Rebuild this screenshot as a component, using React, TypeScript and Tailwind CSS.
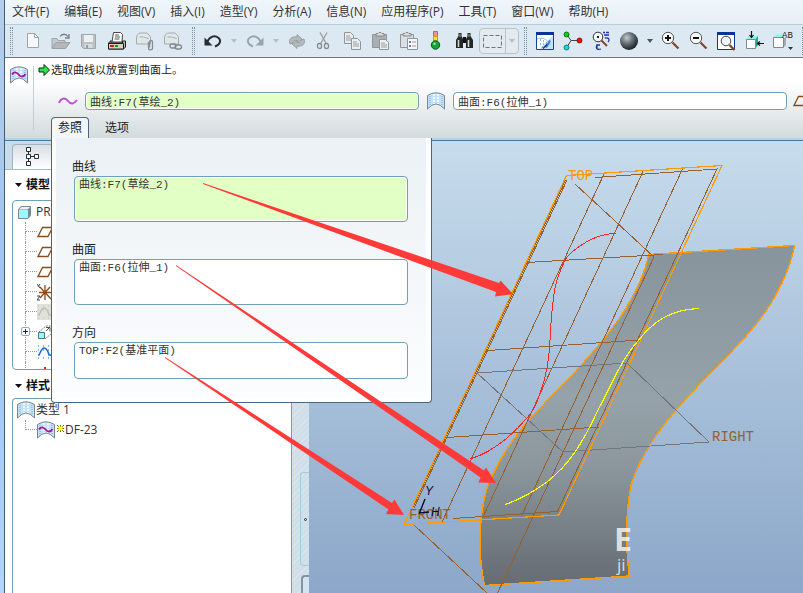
import type { ReactNode } from 'react'

const menus = [
  '文件(F)', '编辑(E)', '视图(V)', '插入(I)', '造型(Y)', '分析(A)',
  '信息(N)', '应用程序(P)', '工具(T)', '窗口(W)', '帮助(H)',
]

const fields = [
  { id: 'ref-curve', label: '曲线', value: '曲线:F7(草绘_2)', active: true, size: 'h-[46px]' },
  { id: 'ref-surface', label: '曲面', value: '曲面:F6(拉伸_1)', active: false, size: 'h-[46px]' },
  { id: 'ref-direction', label: '方向', value: 'TOP:F2(基准平面)', active: false, size: 'h-[37px]' },
]

const monoFont = "font-['Liberation_Mono','Noto_Sans_CJK_SC',monospace]"

function Icon({ children }: { children: ReactNode }) {
  return (
    <svg width="20" height="20" viewBox="0 0 20 20" fill="none" className="shrink-0" aria-hidden="true">
      {children}
    </svg>
  )
}

function ToolButton({ label, children }: { label: string; children: ReactNode }) {
  return (
    <button type="button" aria-label={label} className="flex h-8 w-7 shrink-0 items-center justify-center">
      <Icon>{children}</Icon>
    </button>
  )
}

function Caret({ label, dark, wide }: { label: string; dark?: boolean; wide?: boolean }) {
  return (
    <button type="button" aria-label={label} className={`flex h-8 shrink-0 items-center justify-center ${wide ? 'w-[14px]' : 'w-3'}`}>
      <svg width="6" height="4" viewBox="0 0 6 4" fill={dark ? '#44545e' : '#b4bec5'}>
        <path d="M0 0h6L3 4z" />
      </svg>
    </button>
  )
}

function Grip() {
  return (
    <div className="flex w-3 shrink-0 justify-center gap-px">
      <span className="h-7 border-l border-dotted border-[#7d93a3]" />
      <span className="h-7 border-l border-dotted border-[#7d93a3]" />
    </div>
  )
}

function SurfaceIcon({ curve }: { curve?: boolean }) {
  return (
    <svg width="18" height="18" viewBox="0 0 18 18" fill="none" className="shrink-0" aria-hidden="true">
      <path d="M.5 3.5Q9-2 17.5 3.5V17Q13 12 9 12T1 17z" fill="#c3e1f7" />
      <path d="M3 4v10M15 4v10" stroke="#9cc4e4" strokeWidth="2" strokeDasharray="1 1" />
      <path d="M7 2v10M11 2v10" stroke="#eef8ff" strokeWidth="2" strokeDasharray="2 1" />
      <path d="M.5 3.5Q9-2 17.5 3.5V17Q13 12 9 12T.5 17z" stroke="#7b858e" />
      {curve && <path d="M2 8.500c2-3 4.500-2.500 6.500 0s5 3 7-.5" stroke="#a313a9" strokeWidth="1.800" />}
    </svg>
  )
}

function PlaneIcon() {
  return (
    <svg width="16" height="12" viewBox="0 0 16 12" fill="none" className="shrink-0" aria-hidden="true">
      <path d="M5.500 1.500h10l-4.500 9H1z" stroke="#8b4a1e" strokeWidth="1.300" />
    </svg>
  )
}

function MenuBar() {
  return (
    <nav className="flex h-6 shrink-0 items-center gap-px bg-linear-to-b from-[#f0f6fa] to-[#e6eff6]">
      {menus.map(item => (
        <button key={item} type="button" className="shrink-0 px-[7px] text-xs leading-6 whitespace-nowrap text-[#333]">
          {item}
        </button>
      ))}
    </nav>
  )
}

function Toolbar() {
  return (
    <div className="flex h-[34px] shrink-0 items-center overflow-hidden border-t border-b border-t-[#b5cedd] border-b-[#4b829f] bg-[#dce9f2]">
      <Grip />
      <span className="w-[2px] shrink-0" />
      <ToolButton label="新建">
        <path d="M4.500 2.500h7l4 4v10h-11z" fill="#f6f7f7" stroke="#a0a4a7" />
        <path d="M11.500 2.500v4h4" stroke="#a0a4a7" />
      </ToolButton>
      <ToolButton label="打开">
        <path d="M1 17V7.500h5l1 2h7V11" fill="#c7cbce" stroke="#9fa4a7" />
        <path d="M1 17.500 5 11.500h14l-4.500 6z" fill="#b4b8bb" stroke="#9b9fa2" />
        <path d="M9 5.500c2-3 6-3 8 0M18 3v4h-4" stroke="#777f84" strokeWidth="1.300" />
      </ToolButton>
      <ToolButton label="保存">
        <path d="M2.500 3.500h14v14h-12l-2-2z" fill="#bcc1c4" stroke="#a1a6a9" />
        <path d="M5 4h9v7H5z" fill="#edf0f1" />
        <path d="M5.500 13h8v4h-8z" fill="#d9dddf" />
        <path d="M7 14h2v3H7z" fill="#979da1" />
      </ToolButton>
      <ToolButton label="打印">
        <path d="M5 11 6.500 1.500h7l2 2L15 11z" fill="#fff" stroke="#444" />
        <path d="M8 4h4M8 6h5M7.500 8h5" stroke="#555" />
        <path d="M4 9.500 1.500 12v6h15l2-2v-6h-3v2H4z" fill="#b9b9a4" stroke="#1c1c1c" />
        <path d="M1.500 12.500h15v5.500h-15z" fill="#d5d5bd" stroke="#1c1c1c" />
        <path d="M3 14h4v2H3z" fill="#d21b16" />
        <path d="M8 14h3v2H8z" fill="#079b18" />
      </ToolButton>
      <ToolButton label="发送邮件">
        <path d="M1.500 13V7c0-3 1.500-5 4-5h6c2 1 4 3 4 5v6z" fill="#e1e6e9" stroke="#a4abaf" />
        <path d="M4.500 6h4l5 1.500" stroke="#aab0b4" />
        <path d="M13.500 11v6c0 2.500 4 2.500 4 0v-6c0-2-3-2-3 0v5.500" stroke="#888e92" strokeWidth="1.300" />
      </ToolButton>
      <ToolButton label="发送链接">
        <path d="M1.500 13V7c0-3 1.500-5 4-5h6c2 1 4 3 4 5v6z" fill="#e1e6e9" stroke="#a4abaf" />
        <path d="M4.500 6h4l5 1.500" stroke="#aab0b4" />
        <rect x="7" y="13" width="6" height="4" rx="2" stroke="#84898d" strokeWidth="1.300" />
        <rect x="12" y="14" width="6.500" height="4" rx="2" stroke="#84898d" strokeWidth="1.300" />
      </ToolButton>
      <Grip />
      <ToolButton label="撤消">
        <path d="M4 11C7 5 12 4 15 6.500c4 3 2 7-3 9" stroke="#252c32" strokeWidth="1.900" />
        <path d="M1.500 6.500v8h8z" fill="#252c32" />
      </ToolButton>
      <Caret label="撤消列表" wide />
      <ToolButton label="重做">
        <path d="M16 11C13 5 8 4 5 6.500c-4 3-2 7 3 9" stroke="#9ca4aa" strokeWidth="1.900" />
        <path d="M18.500 6.500v8h-8z" fill="#9ca4aa" />
      </ToolButton>
      <Caret label="重做列表" wide />
      <ToolButton label="再生">
        <path d="M3 13C1 8 5 5 10 6V3.500L15 8l-5 4V9.500C7 9 6 10 6 12z" fill="#b4babe" stroke="#8e9599" strokeWidth=".8" />
        <path d="M17 8c2 5-2 8-7 7v2.500L5 13l5-4v2.500c3 .5 4-.5 4-2.500z" fill="#b4babe" stroke="#8e9599" strokeWidth=".8" />
      </ToolButton>
      <ToolButton label="剪切">
        <path d="M5 1.500 11.500 13M12 1.500 5.500 13" stroke="#9ba1a5" strokeWidth="1.400" />
        <rect x="2.500" y="12.500" width="4" height="5" rx="2" stroke="#858b8f" strokeWidth="1.300" />
        <rect x="9.500" y="12.500" width="4" height="5" rx="2" stroke="#858b8f" strokeWidth="1.300" />
      </ToolButton>
      <ToolButton label="复制">
        <path d="M1.500 1.500h6l3 3v8h-9z" fill="#e9ecee" stroke="#8f9599" />
        <path d="M3 5h4M3 7h5M3 9h5" stroke="#989da1" />
        <path d="M8.500 7.500h6l3 3v8h-9z" fill="#eceff0" stroke="#8f9599" />
        <path d="M10 11h4M10 13h6M10 15h6" stroke="#989da1" />
      </ToolButton>
      <ToolButton label="粘贴">
        <path d="M1.500 3.500h14v13h-14z" fill="#a9afb3" stroke="#8f9599" />
        <path d="M5 5V2.500h2l1-1h2l1 1h2V5z" fill="#d8dcde" stroke="#888" />
        <path d="M8.500 8.500h6l3 3v7h-9z" fill="#eceff0" stroke="#8f9599" />
        <path d="M10 12h4M10 14h6M10 16h6" stroke="#989da1" />
      </ToolButton>
      <ToolButton label="选择性粘贴">
        <path d="M1.500 3.500h13v13h-13z" fill="#d8e0e5" stroke="#8f9599" />
        <path d="M4 5V2.500h2l1-1h2l1 1h2V5z" fill="#d8dcde" stroke="#888" />
        <path d="M8.500 7.500h10v11h-10z" fill="#f4f6f7" stroke="#8f9599" />
        <path d="M10 10h2v2h-2zM10 14h2v2h-2z" fill="#7c8387" />
        <path d="M13 11h4M13 15h4" stroke="#989da1" />
      </ToolButton>
      <ToolButton label="模型再生">
        <path d="M6.500.500h4v5h-4z" fill="#f58f94" stroke="#d15c62" />
        <path d="M6.500 5.500h4V10h-4z" fill="#f9e22e" stroke="#bfa71a" />
        <circle cx="8.500" cy="14" r="4.200" fill="#15a33c" stroke="#075820" />
        <circle cx="7.500" cy="12.800" r="1.300" fill="#89e69a" />
      </ToolButton>
      <ToolButton label="查找">
        <path d="M3.500 2h3v3L8 8v9H1V9l2.500-4z" fill="#24282a" />
        <path d="M12.500 2h3v3L18 9v8h-7V8l1.500-3z" fill="#24282a" />
        <path d="M8 6h3v6H8z" fill="#111" />
        <path d="M3.500 9v7M13.500 9v7" stroke="#dadfcf" strokeWidth="1.500" />
        <path d="M5 3v3M14 3v3" stroke="#a7ad9f" />
      </ToolButton>
      <div className="flex h-[26px] shrink-0 items-center rounded-sm border border-[#b8c2c9] bg-[#e3ebf1]">
        <button type="button" aria-label="选取框" className="flex w-[25px] justify-center">
          <Icon>
            <rect x=".5" y="4.500" width="18" height="12" stroke="#6c7479" strokeDasharray="4 2" />
          </Icon>
        </button>
        <span className="h-6 border-l border-[#b8c2c9]" />
        <Caret label="选取框列表" />
      </div>
      <Grip />
      <ToolButton label="重画">
        <path d="M1.500 1.500h17v17h-17z" fill="#fff" stroke="#0b4796" />
        <path d="M1 1h18v3H1z" fill="#06349b" />
        <path d="M18 5v13H5l9-10z" fill="#bfe2fb" />
        <path d="M2 8c6-2 10 0 13 6" stroke="#9bbbd6" />
        <path d="M5 9h1M8 10h1M5 13h1M8 13h1M7 16h1M11 12h1" stroke="#1d6bd0" />
        <path d="M11 16.500 15 9.500" stroke="#3a7cd0" strokeWidth="2" />
        <path d="M8 17.500 12 13.500" stroke="#12386f" strokeWidth="1.500" />
      </ToolButton>
      <ToolButton label="旋转中心">
        <path d="M4 4l4 5.500h9M8 9.500 4 16" stroke="#444" />
        <circle cx="3.500" cy="3.500" r="2.500" fill="#00d600" stroke="#075a07" strokeWidth=".8" />
        <circle cx="16.500" cy="9.500" r="2.500" fill="#f40c0c" stroke="#7c0505" strokeWidth=".8" />
        <circle cx="3.500" cy="16.500" r="2.500" fill="#10dddd" stroke="#046464" strokeWidth=".8" />
      </ToolButton>
      <ToolButton label="定向模式">
        <circle cx="7" cy="6" r="4.800" fill="#f5f8fa" stroke="#333" />
        <path d="M6 5h2v2H6z" fill="#222" />
        <path d="m10.500 9.500 5.500 5.500" stroke="#85442b" strokeWidth="2" />
        <path d="M12 1.500h2M15 1.500h3M13 4h5M14 7c4-1 5 2 3 4M6 14c-2 4 1 5 4 4M9 14H6v3" stroke="#1d35a8" strokeWidth="1.300" />
      </ToolButton>
      <ToolButton label="着色">
        <defs>
          <radialGradient id="ball" cx=".38" cy=".32" r=".65">
            <stop offset="0" stopColor="#c6cdd1" />
            <stop offset=".45" stopColor="#717a80" />
            <stop offset="1" stopColor="#22282c" />
          </radialGradient>
        </defs>
        <circle cx="10" cy="10" r="9" fill="url(#ball)" />
      </ToolButton>
      <Caret label="显示样式" dark wide />
      <ToolButton label="放大">
        <circle cx="7" cy="7" r="5.700" fill="#f8fafb" stroke="#555" />
        <path d="M4 7h6M7 4v6" stroke="#111" strokeWidth="2" />
        <path d="m11.500 11.500 6 6" stroke="#85442b" strokeWidth="2.200" />
      </ToolButton>
      <ToolButton label="缩小">
        <circle cx="7" cy="7" r="5.700" fill="#f8fafb" stroke="#555" />
        <path d="M4 7h6" stroke="#111" strokeWidth="2" />
        <path d="m11.500 11.500 6 6" stroke="#85442b" strokeWidth="2.200" />
      </ToolButton>
      <ToolButton label="重新调整">
        <path d="M.500 1.500h17v17H.500z" fill="#fff" stroke="#0b3a96" />
        <path d="M0 1h18v3H0z" fill="#06349b" />
        <circle cx="9" cy="10" r="4.800" fill="#f1f5f8" stroke="#444" />
        <path d="m12.500 14 5 5" stroke="#85442b" strokeWidth="2.200" />
      </ToolButton>
      <ToolButton label="重定向">
        <path d="M1 8.500 4 5h9l-3 3.500z" fill="#8ff2ee" />
        <path d="M10 8.500 13 5v9l-3 4z" fill="#28a59b" />
        <path d="M1.500 8.500h9v9h-9z" fill="#fff" stroke="#888" />
        <path d="M6.500 0v6M4.500 4l2 2.500 2-2.500M19 12.500h-6M15 10.500l-2.500 2 2.500 2" stroke="#111" strokeWidth="1.200" />
      </ToolButton>
      <ToolButton label="已保存视图">
        <path d="M0 6.500 3 3.500h7l-1 3z" fill="#8ff2ee" />
        <path d="M.500 6.500h10v10H.500z" fill="#fff" stroke="#888" />
        <path d="M11 7l2-1v8l-2 2z" fill="#a5acb0" />
        <text x="9" y="7" fontSize="9" fill="#222" fontFamily="Liberation Mono, monospace">AB</text>
        <path d="M15 16h5l-2.500 3z" fill="#333" />
      </ToolButton>
      <Grip />
    </div>
  )
}

function ReferencesPanel() {
  return (
    <section className="absolute top-full left-0 z-10 w-[381px] rounded-b border border-t-0 border-[#46677f] bg-white pr-[5px] pb-1 pl-1">
      <div className="flex flex-col gap-[19px] bg-linear-to-b from-[#ebf1f5] to-[#fcfdfe] px-[18px] pt-5 pb-[19px]">
        {fields.map(field => (
          <div key={field.id} className="flex flex-col">
            <label htmlFor={field.id} className="-ml-[2px] h-[18px] text-xs leading-[18px] text-[#222]">{field.label}</label>
            <textarea
              id={field.id}
              readOnly
              defaultValue={field.value}
              className={`resize-none overflow-hidden rounded-sm border border-[#71a0b6] px-1 text-[11px] leading-4 text-[#333] outline-none ring-inset ring-1 ring-white ${monoFont} ${field.size} ${field.active ? 'bg-[#e2ffc6]' : 'bg-white'}`}
            />
          </div>
        ))}
      </div>
    </section>
  )
}

function Dashboard() {
  return (
    <div className="flex h-[82px] shrink-0 border-b-2 border-[#bdd0de] bg-linear-to-b from-white from-30% to-[#d3dbdd]">
      <div className="my-2 flex w-[29px] shrink-0 justify-center border-r border-[#c3cdd2]">
        <SurfaceIcon curve />
      </div>
      <div className="flex min-w-0 flex-1 flex-col">
        <div className="flex h-6 items-center pl-1">
          <svg width="13" height="14" viewBox="0 0 13 14" aria-hidden="true">
            <path d="M1 5h5V1.500L11.500 7 6 12.500V9H1z" fill="#2be44a" stroke="#062d0b" />
          </svg>
          <p className="text-[11px] text-[#222]">选取曲线以放置到曲面上。</p>
        </div>
        <div className="mt-[9px] flex h-5 items-center pl-6">
          <svg width="20" height="10" viewBox="0 0 20 10" fill="none" className="shrink-0" aria-hidden="true">
            <path d="M1 7c2-5 6-6 9-2s6 3 9-1" stroke="#c04fd0" strokeWidth="2" />
          </svg>
          <input
            aria-label="曲线"
            readOnly
            defaultValue="曲线:F7(草绘_2)"
            className={`ml-[7px] h-[18px] min-w-0 flex-1 rounded-sm border border-[#71a0b6] bg-[#e2ffc6] px-1 text-[11px] text-[#333] ring-inset ring-1 ring-white outline-none ${monoFont}`}
          />
          <span className="mx-2"><SurfaceIcon /></span>
          <input
            aria-label="曲面"
            readOnly
            defaultValue="曲面:F6(拉伸_1)"
            className={`h-[18px] min-w-0 flex-1 rounded-sm border border-[#71a0b6] bg-white px-1 text-[11px] text-[#333] outline-none ${monoFont}`}
          />
          <span className="ml-[6px] w-[10px] overflow-hidden"><PlaneIcon /></span>
        </div>
        <div className="relative mt-auto ml-[17px] flex h-[21px] items-stretch gap-3 text-xs text-[#222]">
          <button type="button" className="rounded-t border border-b-0 border-[#46677f] bg-[#f3f7f9] px-[6px]">参照</button>
          <button type="button" className="px-1">选项</button>
          <ReferencesPanel />
        </div>
      </div>
    </div>
  )
}

function TreeRow({ children, expandable, last, label }: { children: ReactNode; expandable?: boolean; last?: boolean; label?: string }) {
  return (
    <li className="flex h-5 shrink-0 items-center pl-3">
      <span className="relative flex h-5 w-3 shrink-0 flex-col">
        <span className="h-[10px] border-b border-l border-dotted border-[#999]" />
        {!last && <span className="h-[10px] border-l border-dotted border-[#999]" />}
        {expandable && (
          <button type="button" aria-label="展开" className="absolute top-[5px] -left-1 flex h-[9px] w-[9px] items-center justify-center rounded-xs border border-[#91a9bd] bg-white">
            <svg width="5" height="5" viewBox="0 0 5 5" stroke="#222"><path d="M0 2.500h5M2.500 0v5" /></svg>
          </button>
        )}
      </span>
      {children}
      {label && <span className="text-xs text-[#333]">{label}</span>}
    </li>
  )
}

function SketchIcon({ color, bg }: { color: string; bg: string }) {
  return (
    <svg width="16" height="16" viewBox="0 0 16 16" fill="none" className="shrink-0" aria-hidden="true">
      <path d="M0 0h16v16H0z" fill={bg} />
      <path d="M1 2h15M1 6h15M1 14h15" stroke={color} strokeDasharray="1 4" />
      <path d="M1 11h1c2-4 3-7 5-7s4 3 5 7h3" stroke={color} strokeWidth="1.500" />
    </svg>
  )
}

function Heading({ children }: { children: ReactNode }) {
  return (
    <h2 className="flex shrink-0 items-center gap-1 pl-[10px] text-xs font-bold text-[#111]">
      <svg width="7" height="4" viewBox="0 0 7 4"><path d="M0 0h7L3.500 4z" fill="#111" /></svg>
      {children}
    </h2>
  )
}

function Sidebar() {
  return (
    <aside className="flex w-[287px] shrink-0 flex-col bg-white">
      <div className="flex h-[29px] shrink-0 items-end border-b border-[#a9bac5] bg-[#cadce7] pl-[7px]">
        <button type="button" aria-label="模型树" className="flex h-[25px] w-[42px] items-center justify-center rounded-t border border-b-0 border-[#9fb3c1] bg-linear-to-b from-[#d9dfe3] to-white">
          <svg width="14" height="20" viewBox="0 0 14 20" fill="#fff" stroke="#23313b" aria-hidden="true">
            <path d="M2.500 4v12M4 9.500h5" />
            <path d="M.500.500h4v4h-4zM.500 7.500h4v4h-4zM8.500 7.500h4v4h-4zM.500 14.500h4v4h-4z" />
          </svg>
        </button>
      </div>
      <div className="flex h-[30px] shrink-0 items-center"><Heading>模型</Heading></div>
      <ul className="ml-[7px] flex h-[170px] shrink-0 flex-col overflow-hidden rounded border border-[#71a0b6] bg-white pt-px">
        <li className="flex h-5 shrink-0 items-center gap-1 pl-[5px] text-xs text-[#333]">
          <svg width="14" height="13" viewBox="0 0 14 13" aria-hidden="true">
            <path d="M.500 3.500 3 .500h9.500v9l-2.500 3H.500z" fill="#6c8f93" stroke="#7b898e" />
            <path d="M1 3.500 3.500 1H12L9.500 3.500z" fill="#e8f4f5" />
            <path d="M1 4h9v8H1z" fill="#98fbfb" />
          </svg>
          PR
        </li>
        <TreeRow><PlaneIcon /></TreeRow>
        <TreeRow><PlaneIcon /></TreeRow>
        <TreeRow><PlaneIcon /></TreeRow>
        <TreeRow>
          <svg width="16" height="18" viewBox="0 0 16 18" fill="none" className="shrink-0" aria-hidden="true">
            <path d="M8 2v15M2 9.500h13M3 15 13 4M3 4l11 12" stroke="#8b4a1e" strokeWidth="1.300" />
            <path d="m0 1 3 4M3 1 1 4M0 13h3l-3 4h3" stroke="#444" />
          </svg>
        </TreeRow>
        <TreeRow><SketchIcon color="#c0c0ad" bg="#e1e1dc" /></TreeRow>
        <TreeRow expandable>
          <svg width="16" height="16" viewBox="0 0 16 16" fill="none" className="shrink-0" aria-hidden="true">
            <path d="m2 8 7-6h5M8 15l6-5" stroke="#777" strokeDasharray="2 1" />
            <path d="M1.500 8.500h6v6h-6z" fill="#98fbfb" stroke="#4d7479" />
            <path d="m9 7 4-4M9 3.500h4v4" stroke="#4a5558" />
          </svg>
        </TreeRow>
        <TreeRow><SketchIcon color="#0d6ee0" bg="#fff" /></TreeRow>
        <TreeRow>
          <svg width="16" height="16" viewBox="0 0 16 16" className="shrink-0" aria-hidden="true">
            <path d="M8 3v4" stroke="#e01515" strokeWidth="2" />
          </svg>
        </TreeRow>
      </ul>
      <div className="flex h-7 shrink-0 items-center pt-1"><Heading>样式</Heading></div>
      <ul className="ml-[7px] flex min-h-0 flex-1 flex-col rounded-tl border-t border-r border-l border-[#71a0b6] bg-white pt-px">
        <li className="flex h-5 shrink-0 items-center gap-px pl-1 text-xs text-[#333]">
          <SurfaceIcon />
          类型 1
        </li>
        <TreeRow last label="DF-23">
          <SurfaceIcon curve />
          <svg width="9" height="9" viewBox="0 0 9 9" className="mb-1 ml-px shrink-0" aria-hidden="true">
            <path d="M4.500 1v7M1 4.500h7M1 1l7 7M8 1 1 8" stroke="#6b6510" />
            <path d="M2.500 2.500h4v4h-4z" fill="#ffff20" />
          </svg>
        </TreeRow>
      </ul>
    </aside>
  )
}

function Splitter() {
  return (
    <div className="flex w-[17px] shrink-0 flex-col items-end bg-[repeating-linear-gradient(135deg,#cfdfe9_0px,#cfdfe9_3px,#d8e5ec_3px,#d8e5ec_4px)]">
      <button type="button" aria-label="折叠导航器" className="mt-[331px] flex h-[94px] w-[9px] shrink-0 items-center justify-center rounded-l border border-r-0 border-[#a5cbe0]">
        <span className="h-[3px] w-[3px] rounded-full border border-[#23313b]" />
      </button>
      <span className="mt-[9px] w-2 flex-1 rounded-tl border-t-2 border-l-2 border-[#85959f] bg-[#d3e4ee]" />
    </div>
  )
}

// Model coordinates are kept in window pixels, so the view box starts at the pane's corner.
function Viewport() {
  return (
    <main className="min-w-0 flex-1 bg-linear-to-b from-[#c7dcec] to-[#8ca7c9]">
      <svg viewBox="309 141 494 452" preserveAspectRatio="xMinYMin slice" fill="none" className="h-full w-full">
        <defs>
          <linearGradient id="sheet" x1="0" y1="0" x2="0" y2="1">
            <stop offset="0" stopColor="#88949b" />
            <stop offset=".45" stopColor="#96a2a9" />
            <stop offset=".65" stopColor="#8b969d" />
            <stop offset="1" stopColor="#656c72" />
          </linearGradient>
        </defs>
        <g shapeRendering="crispEdges">
          <path
            d="M484.500 585.500C480 565 479 545 481 520C483 500 486 490 490 480C497 465 510 443 523 427C540 407 560 388 577 370C592 353 610 334 623 313C635 294 645 275 648.500 254.500L794.500 245.500C792 260 788 270 782 283C772 305 760 320 747 335C732 352 712 371 697 387C678 407 660 428 650 445C640 461 635 472 631 485C627 505 626 525 627 550L629 576z"
            fill="url(#sheet)"
            stroke="#ff9a05"
            strokeWidth="1.400"
          />
          <path d="M477 373 627 363 709 442 563 452z" stroke="#75757d" />
          <g stroke="#97602f">
            <path d="M604 174 442 522M643 171.500 482.500 518M682.500 169 521.500 516" />
            <path d="M527 262.500 663 254.500M488 350.500 640 340M447 437.500 599 427" />
            <path d="M567 180 414 508M565.500 180 412.500 508M595 177.500 717 169 557.500 511.500 453 518.500" />
            <path d="M575 184 654 257 497 594M414 525 487 593" />
          </g>
          <path d="M566.500 175.500 722 165.500 559 515 404 524.500z" stroke="#ff9a05" strokeWidth="1.200" />
          <path d="M616 233C602 234 591 238 580 246C573 251 568 254 565 260C559 273 557 278 555 288C552 305 551 320 550 340C549 363 546 378 540 393C536 406 533 411 527 418C521 425 514 432 507 438C495 448 484 455 470 459" stroke="#ff2323" />
          <path d="M699 308.500C684 309 675 312 663 318C655 323 649 328 643 335C636 343 630 350 624 360C613 379 606 395 598 410C591 425 584 439 575 452C567 464 557 474 547 482C534 491 522 499 505 504.500" stroke="#ffff16" strokeWidth="1.200" />
        </g>
        <g fontFamily="Liberation Mono, monospace" fontSize="14">
          <text x="568" y="180" fill="#ff9a05">TOP</text>
          <text x="409" y="519" fill="#97602f">FRONT</text>
          <text x="712" y="441" fill="#97602f">RIGHT</text>
        </g>
        <path d="M425 499 419.500 513 429 512" stroke="#07073d" strokeWidth="1.400" />
        <g fontFamily="Liberation Sans, sans-serif" fontSize="12" fontStyle="italic" fill="#07073d">
          <text x="425" y="495">Y</text>
          <text x="431" y="516">H</text>
        </g>
        <g fontFamily="Open Sans, sans-serif" fill="#fff" fillOpacity=".75">
          <text x="614" y="551" fontSize="32" fontWeight="700">E</text>
          <text x="617" y="571" fontSize="17">ji</text>
        </g>
      </svg>
    </main>
  )
}

function Arrows() {
  return (
    <svg className="pointer-events-none absolute inset-0 z-20 h-full w-full" fill="#ff3a38" aria-hidden="true">
      <path d="M203 183 499 283 500.500 280.500 513 294 495 296.500 496 292 203 184z" />
      <path d="M176 265 484 470.500 486 467.500 496 483 478.500 482.500 480.500 477.500 176 266z" />
      <path d="M165 357 392 503 394.500 499.500 404 515 386 514 388.500 509.500 165 358z" />
    </svg>
  )
}

export default function App() {
  return (
    <div className="relative flex h-screen overflow-hidden bg-white font-['Open_Sans','Noto_Sans_CJK_SC',sans-serif]">
      <div className="w-1 shrink-0 bg-linear-to-b from-[#b4cdec] via-[#9fc4ee] to-[#b3d5fa]" />
      <div className="flex min-w-0 flex-1 flex-col border-l border-[#3f5f78]">
        <MenuBar />
        <Toolbar />
        <Dashboard />
        <div className="flex min-h-0 flex-1 border-t border-[#46799b]">
          <Sidebar />
          <Splitter />
          <Viewport />
        </div>
      </div>
      <Arrows />
    </div>
  )
}
